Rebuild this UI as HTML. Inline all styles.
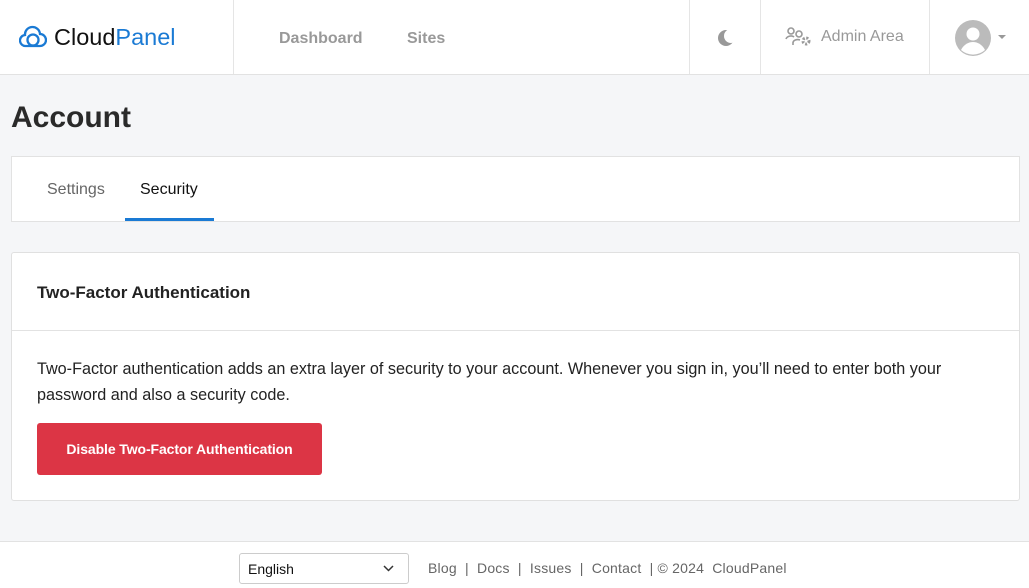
<!DOCTYPE html>
<html><head><style>
*{box-sizing:border-box;margin:0;padding:0}
body{width:1029px;height:588px;background:#f5f6f8;font-family:"Liberation Sans",sans-serif;position:relative;overflow:hidden;color:#222}
.hdr{position:absolute;left:0;top:0;width:1029px;height:75px;background:#fff;border-bottom:1px solid #e2e2e2}
.vl{position:absolute;top:0;height:74px;width:1px;background:#e5e5e5}
.logo{position:absolute;left:54px;top:24px;font-size:23.5px;color:#111}
.logo span{color:#1a7ad4}
.nav{position:absolute;top:30px;font-size:16px;font-weight:bold;color:#999}
h1{position:absolute;left:11px;top:101px;font-size:30px;font-weight:bold;color:#2a2a2a}
.tabs{position:absolute;left:11px;top:156px;width:1009px;height:66px;background:#fff;border:1px solid #e2e2e2}
.tab{position:absolute;top:24px;font-size:16px;color:#666}
.card{position:absolute;left:11px;top:252px;width:1009px;height:249px;background:#fff;border:1px solid #e0e0e0;border-radius:3px}
.btn{position:absolute;left:25px;top:170px;width:285px;height:52px;background:#dc3545;color:#fff;border-radius:3px;font-size:14px;font-weight:bold;text-align:center;line-height:52px;letter-spacing:-0.1px}
.ftr{position:absolute;left:0;top:541px;width:1029px;height:47px;background:#fff;border-top:1px solid #e2e2e2}
.sel{position:absolute;left:239px;top:11px;width:170px;height:31px;border:1px solid #ccc;border-radius:3px;font-size:14px;padding:7px 8px;color:#111}
.links{position:absolute;left:428px;top:18px;font-size:14px;color:#666;white-space:nowrap;letter-spacing:0.2px}
</style></head><body>
<div class="hdr">
<svg style="position:absolute;left:19px;top:24px" width="28" height="25" viewBox="0 0 28 25" fill="none" stroke="#1a7ad4" stroke-width="2.3"><path d="M7 22a5.5 5.5 0 0 1-1-11 7.5 7.5 0 0 1 15-1 6 6 0 0 1 0 12H7z"/><circle cx="14" cy="16" r="5.5"/></svg>
<div class="logo">Cloud<span>Panel</span></div>
<div class="vl" style="left:233px"></div>
<div class="nav" style="left:279px">Dashboard</div>
<div class="nav" style="left:407px">Sites</div>
<div class="vl" style="left:689px"></div>
<svg style="position:absolute;left:717px;top:29px" width="18" height="18" viewBox="0 0 18 18"><defs><mask id="m"><rect width="18" height="18" fill="#fff"/><circle cx="14" cy="7" r="7" fill="#000"/></mask></defs><circle cx="9" cy="9" r="8" fill="#999" mask="url(#m)"/></svg>
<div class="vl" style="left:760px"></div>
<svg style="position:absolute;left:785px;top:27px" width="28" height="20" viewBox="0 0 28 20" fill="none" stroke="#999" stroke-width="1.6"><circle cx="6" cy="4" r="3"/><circle cx="14" cy="7" r="3"/><path d="M1 12c1-3 6-4 8-2M8 18v-2c0-3 4-4 7-3"/><circle cx="21" cy="14" r="3" stroke-width="3" stroke-dasharray="2 1.5"/></svg>
<div style="position:absolute;left:821px;top:28px;font-size:16px;color:#999">Admin Area</div>
<div class="vl" style="left:929px"></div>
<svg style="position:absolute;left:955px;top:20px" width="36" height="36" viewBox="0 0 36 36"><circle cx="18" cy="18" r="18" fill="#bbb"/><circle cx="18" cy="14" r="6.5" fill="#fff"/><path d="M6 30c3-6 8-8 12-8s9 2 12 8a18 18 0 0 1-24 0z" fill="#fff"/></svg>
<svg style="position:absolute;left:998px;top:35px" width="8" height="5"><path d="M0 0h8L4 4z" fill="#999"/></svg>
</div>
<h1>Account</h1>
<div class="tabs">
<div class="tab" style="left:35px">Settings</div>
<div class="tab" style="left:128px;color:#111">Security</div>
<div style="position:absolute;left:113px;top:61px;width:89px;height:3px;background:#1a7ad4"></div>
</div>
<div class="card">
<div style="position:absolute;left:25px;top:30px;font-size:17px;font-weight:bold;color:#222">Two-Factor Authentication</div>
<div style="position:absolute;left:0;top:77px;width:100%;height:1px;background:#e2e2e2"></div>
<div style="position:absolute;left:25px;top:103px;width:925px;font-size:16.2px;line-height:26px;color:#222">Two-Factor authentication adds an extra layer of security to your account. Whenever you sign in, you’ll need to enter both your password and also a security code.</div>
<div class="btn">Disable Two-Factor Authentication</div>
</div>
<div class="ftr">
<div class="sel">English<svg style="position:absolute;right:14px;top:11px" width="11" height="7" fill="none" stroke="#333" stroke-width="1.5"><path d="M1 1l4.5 4.5L10 1"/></svg></div>
<div class="links">Blog &nbsp;|&nbsp; Docs &nbsp;|&nbsp; Issues &nbsp;|&nbsp; Contact &nbsp;| © 2024 &nbsp;CloudPanel</div>
</div>
</body></html>
